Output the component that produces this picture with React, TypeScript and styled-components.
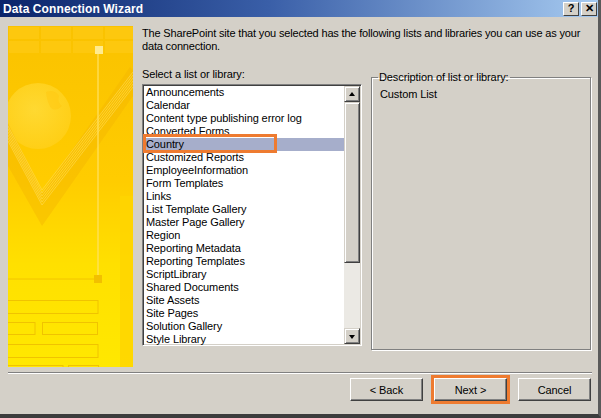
import styled, { createGlobalStyle } from 'styled-components';

const GlobalStyle = createGlobalStyle`
  html, body {
    margin: 0;
    padding: 0;
    background: #d4d0c8;
  }
  body {
    font-family: "Liberation Sans", Arial, sans-serif;
    font-size: 11px;
    letter-spacing: -0.1px;
    color: #000;
  }
`;

const items = [
  'Announcements',
  'Calendar',
  'Content type publishing error log',
  'Converted Forms',
  'Country',
  'Customized Reports',
  'EmployeeInformation',
  'Form Templates',
  'Links',
  'List Template Gallery',
  'Master Page Gallery',
  'Region',
  'Reporting Metadata',
  'Reporting Templates',
  'ScriptLibrary',
  'Shared Documents',
  'Site Assets',
  'Site Pages',
  'Solution Gallery',
  'Style Library',
];

const Window = styled.div`
  width: 601px;
  height: 418px;
  box-sizing: border-box;
  display: flex;
  flex-direction: column;
  background: #d4d0c8;
  border-right: 3px solid #5a5a5a;
  border-bottom: 4px solid #3c3c3c;
  overflow: hidden;
`;

const TitleBar = styled.div`
  height: 17px;
  flex: none;
  display: flex;
  align-items: center;
  justify-content: space-between;
  padding: 0 1px 0 3px;
  background: linear-gradient(to right, #0a246a 0%, #3a5fa8 45%, #a6caf0 100%);
`;

const Title = styled.span`
  color: #fff;
  font-weight: bold;
  font-size: 12px;
  letter-spacing: 0.1px;
`;

const Caps = styled.div`
  display: flex;
  gap: 2px;
`;

const CapButton = styled.div`
  width: 16px;
  height: 14px;
  box-sizing: border-box;
  display: flex;
  align-items: center;
  justify-content: center;
  background: #d4d0c8;
  border-top: 1px solid #fff;
  border-left: 1px solid #fff;
  border-right: 1px solid #404040;
  border-bottom: 1px solid #404040;
  font-weight: bold;
  font-size: 11px;
  line-height: 1;
`;

const Body = styled.div`
  flex: 1;
  display: flex;
  flex-direction: column;
  padding: 9px 6px 0 8px;
`;

const Main = styled.div`
  display: flex;
  gap: 9px;
  height: 341px;
`;

const Banner = styled.div`
  width: 125px;
  height: 341px;
  flex: none;
  svg {
    display: block;
  }
`;

const Content = styled.div`
  flex: 1;
  display: flex;
  flex-direction: column;
`;

const Intro = styled.p`
  margin: 1px 0 0;
  line-height: 13px;
  width: 454px;
  letter-spacing: -0.17px;
`;

const Columns = styled.div`
  display: flex;
  gap: 9px;
  margin-top: 15px;
`;

const ListColumn = styled.div`
  display: flex;
  flex-direction: column;
  width: 220px;
`;

const Label = styled.div`
  line-height: 13px;
  height: 16px;
`;

const ListBox = styled.div`
  position: relative;
  height: 262px;
  box-sizing: border-box;
  display: flex;
  background: #fff;
  border-top: 1px solid #808080;
  border-left: 1px solid #808080;
  border-right: 1px solid #fff;
  border-bottom: 1px solid #fff;
  box-shadow: inset 1px 1px 0 #404040, inset -1px -1px 0 #d4d0c8;
  padding: 1px;
  overflow: hidden;
`;

const Rows = styled.div`
  flex: 1;
  display: flex;
  flex-direction: column;
`;

const Row = styled.div<{ $selected?: boolean }>`
  height: 13px;
  line-height: 13px;
  padding-left: 2px;
  flex: none;
  white-space: nowrap;
  background: ${p => (p.$selected ? '#a6aecb' : 'transparent')};
`;

const ScrollBar = styled.div`
  width: 16px;
  flex: none;
  display: flex;
  flex-direction: column;
  background: #ebe9e4;
`;

const ScrollButton = styled.div`
  width: 16px;
  height: 16px;
  flex: none;
  box-sizing: border-box;
  background: #d4d0c8;
  border-top: 1px solid #d4d0c8;
  border-left: 1px solid #d4d0c8;
  border-right: 1px solid #404040;
  border-bottom: 1px solid #404040;
  box-shadow: inset 1px 1px 0 #fff, inset -1px -1px 0 #808080;
  display: flex;
  align-items: center;
  justify-content: center;
`;

const Thumb = styled(ScrollButton)`
  height: 161px;
`;

const Track = styled.div`
  flex: 1;
`;

const Arrow = styled.div<{ $down?: boolean }>`
  width: 0;
  height: 0;
  border-left: 3.5px solid transparent;
  border-right: 3.5px solid transparent;
  ${p =>
    p.$down
      ? 'border-top: 4px solid #000; margin-top: 1px;'
      : 'border-bottom: 4px solid #000; margin-top: -1px;'}
`;

const Highlight = styled.div<{ $top: number; $left: number; $w: number; $h: number }>`
  position: absolute;
  top: ${p => p.$top}px;
  left: ${p => p.$left}px;
  width: ${p => p.$w}px;
  height: ${p => p.$h}px;
  box-sizing: border-box;
  border: 3px solid #ee7b30;
  pointer-events: none;
`;

const GroupBox = styled.fieldset`
  margin: 3px 0 0;
  width: 220px;
  height: 279px;
  box-sizing: border-box;
  padding: 2px 8px;
  border: 1px solid #808080;
  box-shadow: 1px 1px 0 #fff, inset 1px 1px 0 #fff;
  legend {
    padding: 0 1px;
    margin-left: -2px;
    line-height: 13px;
  }
`;

const Description = styled.div`
  line-height: 13px;
  margin-top: 2px;
`;

const Separator = styled.div`
  margin-top: 5px;
  height: 0;
  border-top: 1px solid #808080;
  border-bottom: 1px solid #fff;
  width: 584px;
`;

const ButtonRow = styled.div`
  display: flex;
  justify-content: flex-end;
  gap: 11px;
  margin-top: 4px;
  padding-right: 1px;
`;

const ButtonWrap = styled.div`
  position: relative;
`;

const Button = styled.div`
  width: 73px;
  height: 23px;
  box-sizing: border-box;
  display: flex;
  align-items: center;
  justify-content: center;
  background: #d4d0c8;
  border-top: 1px solid #fff;
  border-left: 1px solid #fff;
  border-right: 1px solid #404040;
  border-bottom: 1px solid #404040;
  box-shadow: inset -1px -1px 0 #808080;
`;

function BannerArt() {
  return (
    <svg width="125" height="341" viewBox="0 0 125 341">
      <defs>
        <linearGradient id="bg" x1="0" y1="0" x2="0" y2="1">
          <stop offset="0" stopColor="#fac200" />
          <stop offset="0.45" stopColor="#ffcc00" />
          <stop offset="0.7" stopColor="#ffe000" />
          <stop offset="1" stopColor="#ffe800" />
        </linearGradient>
        <radialGradient id="globe" cx="0.45" cy="0.4" r="0.6">
          <stop offset="0" stopColor="#ffdc3a" />
          <stop offset="1" stopColor="#ffd01a" />
        </radialGradient>
      </defs>
      <rect width="125" height="341" fill="url(#bg)" />
      {/* top grid */}
      {[0, 1, 2, 3].map(c =>
        [0, 1].map(r => (
          <rect
            key={`${c}-${r}`}
            x={c * 32 + 1}
            y={r * 14 + 1}
            width={30}
            height={12}
            fill="#ffcb18"
            opacity={0.6}
          />
        ))
      )}
      {/* globe */}
      <circle cx="30" cy="90" r="33" fill="url(#globe)" opacity="0.85" />
      <path d="M38 66 q8 -3 13 4 q-2 6 3 10 q-6 6 -11 2 q-4 -6 -5 -16z" fill="#ffc810" opacity="0.5" />
      {/* checkmark */}
      <path d="M0 97 L34 167 L122 41 L125 44 L125 70 L34 200 L0 140 Z" fill="#f5b600" opacity="0.45" />
      {[0, 1, 2, 3, 4, 5].map(i => (
        <polyline
          key={i}
          points={`0,${100 + i * 3} ${34},${164 + i * 3} ${125},${46 + i * 3}`}
          fill="none"
          stroke="#ffd84a"
          strokeWidth="1"
          opacity="0.7"
        />
      ))}
      {/* vertical line and nodes */}
      <line x1="90" y1="24" x2="90" y2="253" stroke="#ffe266" strokeWidth="1.2" />
      <rect x="87" y="20" width="8" height="8" fill="#ffeb90" />
      <rect x="112" y="170" width="13" height="171" fill="#ffd400" opacity="0.8" />
      <line x1="0" y1="253" x2="90" y2="253" stroke="#f2c400" strokeWidth="1" />
      <rect x="86" y="249" width="8" height="8" fill="#f2c000" />
      <g fill="none" stroke="#f0c300" strokeWidth="1">
        <rect x="-1" y="274.5" width="91" height="13" />
        <rect x="-1" y="296.5" width="28" height="12" />
        <rect x="34.5" y="296.5" width="55" height="12" />
        <rect x="-1" y="318.5" width="91" height="13" />
        <rect x="-1" y="339.5" width="56" height="6" />
        <rect x="60.5" y="339.5" width="30" height="6" />
      </g>
    </svg>
  );
}

export default function App() {
  return (
    <>
      <GlobalStyle />
      <Window>
        <TitleBar>
          <Title>Data Connection Wizard</Title>
          <Caps>
            <CapButton>?</CapButton>
            <CapButton>✕</CapButton>
          </Caps>
        </TitleBar>
        <Body>
          <Main>
            <Banner>
              <BannerArt />
            </Banner>
            <Content>
              <Intro>
                The SharePoint site that you selected has the following lists and libraries you can use as your
                data connection.
              </Intro>
              <Columns>
                <ListColumn>
                  <Label>Select a list or library:</Label>
                  <ListBox>
                    <Rows>
                      {items.map(name => (
                        <Row key={name} $selected={name === 'Country'}>
                          {name}
                        </Row>
                      ))}
                    </Rows>
                    <ScrollBar>
                      <ScrollButton>
                        <Arrow />
                      </ScrollButton>
                      <Thumb />
                      <Track />
                      <ScrollButton>
                        <Arrow $down />
                      </ScrollButton>
                    </ScrollBar>
                    <Highlight $top={49} $left={0} $w={134} $h={19} />
                  </ListBox>
                </ListColumn>
                <GroupBox>
                  <legend>Description of list or library:</legend>
                  <Description>Custom List</Description>
                </GroupBox>
              </Columns>
            </Content>
          </Main>
          <Separator />
          <ButtonRow>
            <Button>&lt; Back</Button>
            <ButtonWrap>
              <Button>Next &gt;</Button>
              <Highlight $top={-3} $left={-3} $w={79} $h={29} />
            </ButtonWrap>
            <Button>Cancel</Button>
          </ButtonRow>
        </Body>
      </Window>
    </>
  );
}
